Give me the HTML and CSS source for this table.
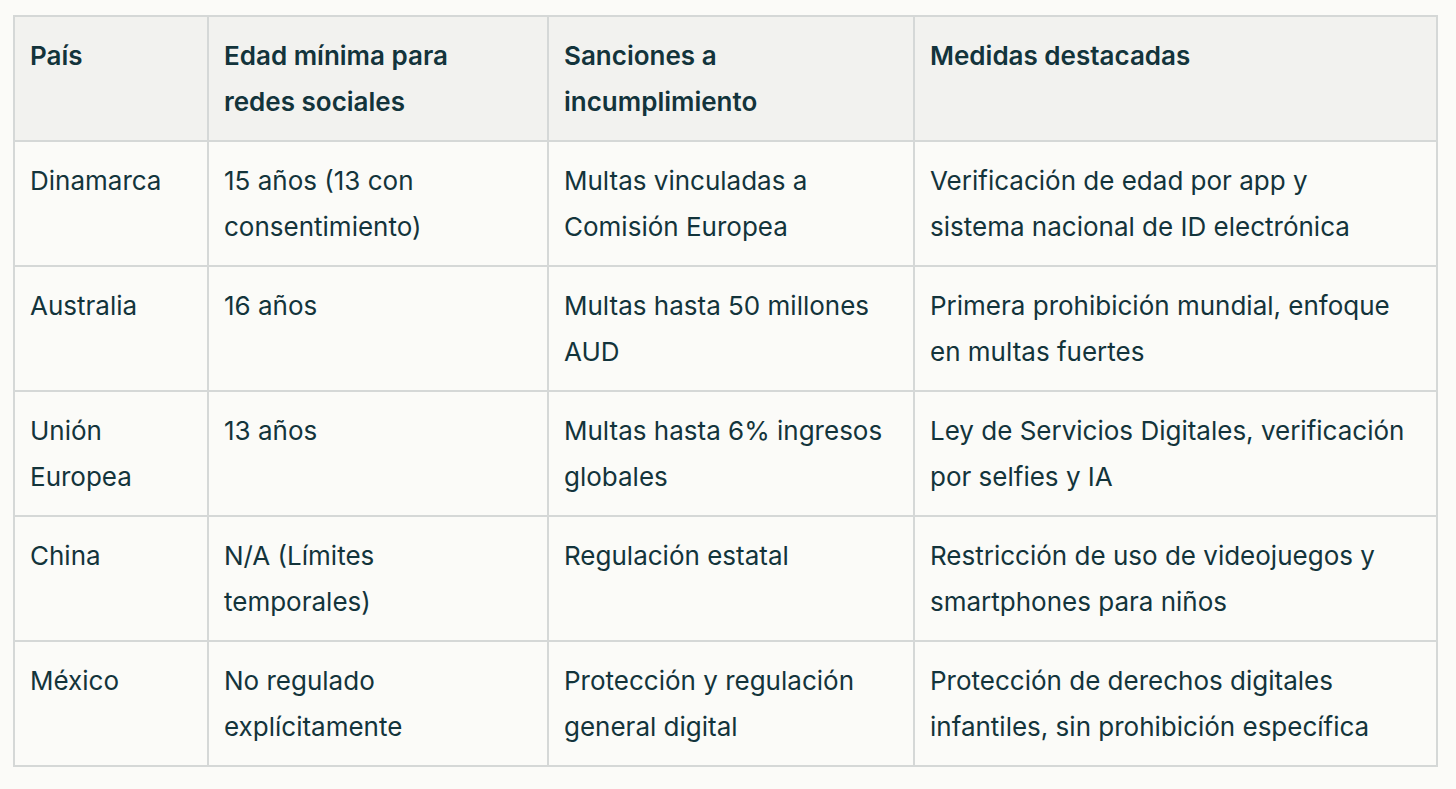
FILE: index.html
```html
<!DOCTYPE html>
<html lang="es">
<head>
<meta charset="utf-8">
<link rel="stylesheet" href="styles.css">
</head>
<body>
<div class="wrap">
<table class="tbl">
  <colgroup>
    <col class="c1"><col class="c2"><col class="c3"><col class="c4">
  </colgroup>
  <thead>
    <tr><th>País</th><th>Edad mínima para<br>redes sociales</th><th>Sanciones a<br>incumplimiento</th><th>Medidas destacadas</th></tr>
  </thead>
  <tbody>
    <tr><td>Dinamarca</td><td>15 años (13 con consentimiento)</td><td>Multas vinculadas a Comisión Europea</td><td>Verificación de edad por app y<br>sistema nacional de ID electrónica</td></tr>
    <tr><td>Australia</td><td>16 años</td><td>Multas hasta 50 millones AUD</td><td>Primera prohibición mundial, enfoque en multas fuertes</td></tr>
    <tr><td>Unión Europea</td><td>13 años</td><td>Multas hasta 6% ingresos globales</td><td>Ley de Servicios Digitales, verificación por selfies y IA</td></tr>
    <tr><td>China</td><td>N/A (Límites<br>temporales)</td><td>Regulación estatal</td><td>Restricción de uso de videojuegos y smartphones para niños</td></tr>
    <tr><td>México</td><td>No regulado explícitamente</td><td>Protección y regulación general digital</td><td>Protección de derechos digitales infantiles, sin prohibición específica</td></tr>
  </tbody>
</table>
</div>
</body>
</html>
```

FILE: styles.css
```css
html, body { margin: 0; padding: 0; background: #fbfbf8; }
body { font-family: Inter, "Noto Sans", sans-serif; color: #13343b; }
.wrap { padding: 15px 0 0 13px; }
.tbl { border-collapse: collapse; width: 1423px; table-layout: fixed; font-size: 26px; }
.c1 { width: 194px; }
.c2 { width: 340px; }
.c3 { width: 366px; }
.c4 { width: 523px; }
.tbl th, .tbl td { border: 2px solid #d5d8d7; text-align: left; vertical-align: top; padding: 16px 12px 15px 15px; line-height: 46px; height: 92px; }
.tbl th { background: #f2f2ef; font-weight: 600; }
.tbl td { font-weight: 400; }
```
